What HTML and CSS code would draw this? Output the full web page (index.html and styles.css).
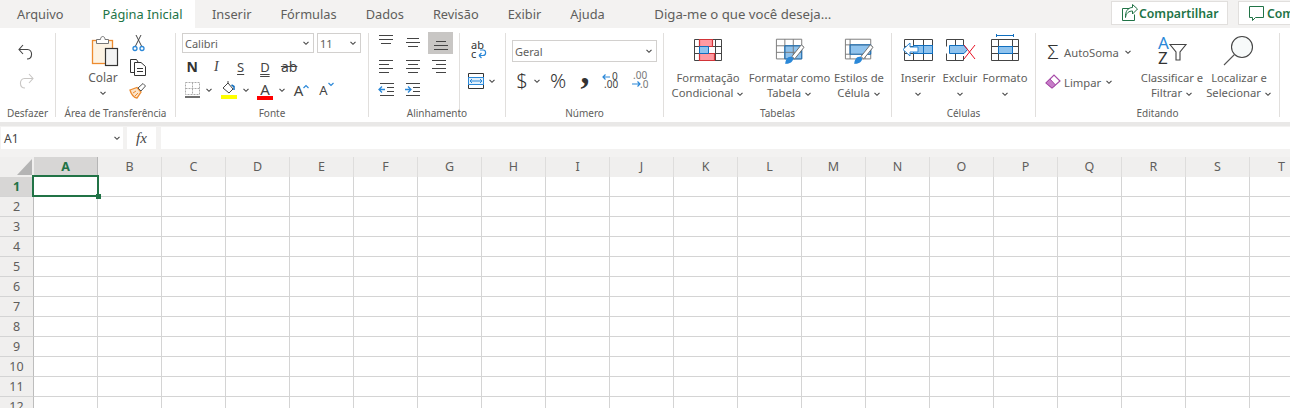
FILE: index.html
```html
<!DOCTYPE html>
<html lang="pt-BR">
<head>
<meta charset="utf-8">
<title>Excel</title>
<link rel="stylesheet" href="styles.css">
</head>
<body>
<svg class="defs" aria-hidden="true"><symbol id="chev" viewBox="0 0 8 8"><path d="M1.500 2.800 4 5.300 6.500 2.800" fill="none" stroke="#444" stroke-width="1.100"/></symbol></svg>
<header class="tabbar">
  <nav class="tabs">
    <a class="tab tab-file">Arquivo</a>
    <a class="tab tab-active">Página Inicial</a>
    <a class="tab">Inserir</a>
    <a class="tab">Fórmulas</a>
    <a class="tab">Dados</a>
    <a class="tab">Revisão</a>
    <a class="tab">Exibir</a>
    <a class="tab">Ajuda</a>
    <span class="tell">Diga-me o que você deseja...</span>
  </nav>
  <div class="actions">
    <button class="action action-share"><svg width="20" height="20" viewBox="0 0 20 20" fill="none" stroke="#217346"><path d="M9.500 5.500H2.500V17.500H14.500V11.500"/><path d="M5.500 14.500C6 10 9 8 12.500 8V11L17.500 6 12.500 1.500V4.500C8 4.500 5 8.500 5.500 14.500Z"/></svg>Compartilhar</button>
    <button class="action action-comment"><svg width="20" height="20" viewBox="0 0 20 20" fill="none" stroke="#217346"><path d="M2.500 3.500H16.500V14.500H8.500L5.500 17.500V14.500H2.500Z"/></svg>Comentários</button>
  </div>
</header>

<section class="ribbon">
  <div class="group g-undo">
    <div class="body undo-body">
      <svg class="ico" width="20" height="20" viewBox="0 0 20 20" fill="none" stroke="#444" stroke-width="1.100"><path d="M7 4 3 8.500 7 13M3 8.500H11.500C17 8.500 17 18 11 18"/></svg>
      <svg class="ico" width="20" height="20" viewBox="0 0 20 20" fill="none" stroke="#c8c6c4" stroke-width="1.100"><path d="M13 4 17 8.500 13 13M17 8.500H8.500C3 8.500 3 18 9 18"/></svg>
    </div>
    <div class="label">Desfazer</div>
  </div>

  <div class="group g-clip">
    <div class="body clip-body">
      <div class="paste">
        <svg width="32" height="32" viewBox="0 0 32 32"><rect x="5.500" y="5.500" width="20" height="23" fill="#fdf3e3" stroke="#ed8b2f" stroke-width="1.300"/><path d="M9.500 8.500V4.500H13.500C13.500 .5 18 .5 18 4.500H21.500V8.500Z" fill="#fff" stroke="#777"/><rect x="18.500" y="13.500" width="12" height="17" fill="#f3f3f3" stroke="#333" stroke-width="1.200"/></svg>
        <span class="colar">Colar</span>
        <svg class="chev" width="8" height="8"><use href="#chev"/></svg>
      </div>
      <div class="clip-tools">
        <svg width="20" height="20" viewBox="0 0 20 20" fill="none"><path d="M8.500 13 14 2M14.500 13 9 2" stroke="#444"/><circle cx="8" cy="15.500" r="2" stroke="#2b88d8" stroke-width="1.300"/><circle cx="15" cy="15.500" r="2" stroke="#2b88d8" stroke-width="1.300"/></svg>
        <svg width="20" height="20" viewBox="0 0 20 20" fill="none" stroke="#333"><path d="M7.500 15.500H3.500V2.500H9.500L11 5"/><path d="M7.500 5.500H14L18.500 9.500V18.500H7.500Z" fill="#fff"/><path d="M10 11.500H16M10 14.500H16"/></svg>
        <svg width="20" height="20" viewBox="0 0 20 20" fill="none"><path d="M3 9 10 6.500 14 11 10 17C7 17 4 13 3 9Z" fill="#fbe3c8" stroke="#ed8b2f" stroke-width="1.300"/><path d="M6 12 9 10M8 15 11 12" stroke="#ed8b2f"/><path d="M11 7 16 2.500 18.500 5 14 10Z" fill="#fff" stroke="#555"/></svg>
      </div>
    </div>
    <div class="label">Área de Transferência</div>
  </div>

  <div class="group g-font">
    <div class="body font-body">
      <div class="selects">
        <div class="select sel-font"><span>Calibri</span><svg width="8" height="8"><use href="#chev"/></svg></div>
        <div class="select sel-size"><span>11</span><svg width="8" height="8"><use href="#chev"/></svg></div>
      </div>
      <div class="style-row">
        <span class="st st-b">N</span><span class="st st-i">I</span><span class="st st-s">S</span><span class="st st-d">D</span><span class="st st-x">ab</span>
      </div>
      <div class="color-row">
        <div class="split"><span class="split-ico"><svg width="18" height="20" viewBox="0 0 18 20" fill="none"><path d="M2.500 2.500H16.500V14.500H2.500ZM9.500 2.500V14.500M2.500 8.500H16.500" stroke="#aaa" stroke-dasharray="2 1"/><path d="M2 17H17" stroke="#333" stroke-width="1.400"/></svg></span><svg class="sp-chev" width="8" height="8"><use href="#chev"/></svg></div>
        <div class="split"><span class="split-ico"><svg width="18" height="20" viewBox="0 0 18 20" fill="none"><path d="M3 8 8 3 13 9 9 13Z" stroke="#444"/><path d="M8 1V4" stroke="#444"/><path d="M14 10V6.500L11.500 5" stroke="#106ebe" stroke-width="1.500"/><rect x="1" y="15" width="16" height="4" fill="#ffff00" stroke="none"/></svg></span><svg class="sp-chev" width="8" height="8"><use href="#chev"/></svg></div>
        <div class="split"><span class="split-ico fontcolor">A</span><svg class="sp-chev" width="8" height="8"><use href="#chev"/></svg></div>
        <span class="grow">A<svg width="6" height="5" viewBox="0 0 6 5"><path d="M.5 4 3 1.500 5.500 4" fill="none" stroke="#2b88d8" stroke-width="1.200"/></svg></span>
        <span class="shrink">A<svg width="6" height="5" viewBox="0 0 6 5"><path d="M.5 1 3 3.500 5.500 1" fill="none" stroke="#2b88d8" stroke-width="1.200"/></svg></span>
      </div>
    </div>
    <div class="label">Fonte</div>
  </div>

  <div class="group g-align">
    <div class="body align-body">
      <div class="al-grid">
        <span class="al"><svg width="20" height="20" fill="none" stroke="#444"><path d="M3 2.500H17M3 6.500H17M5 10.500H15"/></svg></span>
        <span class="al"><svg width="20" height="20" fill="none" stroke="#444"><path d="M4 5.500H16M3 9.500H17M5 13.500H15"/></svg></span>
        <span class="al al-on"><svg width="20" height="20" fill="none" stroke="#444"><path d="M5 8.500H15M3 12.500H17M3 16.500H17"/></svg></span>
        <span class="al"><svg width="20" height="20" fill="none" stroke="#444"><path d="M3 3.500H17M3 7.500H13M3 11.500H17M3 15.500H13"/></svg></span>
        <span class="al"><svg width="20" height="20" fill="none" stroke="#444"><path d="M3 3.500H17M5 7.500H15M3 11.500H17M5 15.500H15"/></svg></span>
        <span class="al"><svg width="20" height="20" fill="none" stroke="#444"><path d="M3 3.500H17M7 7.500H17M3 11.500H17M7 15.500H17"/></svg></span>
        <span class="al"><svg width="20" height="20" fill="none"><path d="M4 2.500H18M11 6.500H18M11 10.500H18M4 14.500H18" stroke="#444"/><path d="M9 8.500H3M6 5.500 3 8.500 6 11.500" stroke="#2b88d8" stroke-width="1.300"/></svg></span>
        <span class="al"><svg width="20" height="20" fill="none"><path d="M3 2.500H17M10 6.500H17M10 10.500H17M3 14.500H17" stroke="#444"/><path d="M2 8.500H8M5 5.500 8 8.500 5 11.500" stroke="#2b88d8" stroke-width="1.300"/></svg></span>
      </div>
    </div>
    <div class="label-run">Alinhamento</div>
  </div>

  <div class="group g-wrap">
    <div class="body wrap-body">
      <svg width="24" height="20" viewBox="0 0 24 20" fill="none"><text x="6" y="9" class="abc">ab</text><text x="6" y="18" class="abc">c</text><path d="M14 15.500H18C21.500 15.500 21.500 10 18 10H15M14 15.500 16.500 13M14 15.500 16.500 18" stroke="#2b88d8" stroke-width="1.200"/></svg>
      <div class="merge"><svg width="24" height="20" viewBox="0 0 24 20" fill="none"><path d="M3.500 2.500H18.500V17.500H3.500ZM3.500 6.500H18.500M3.500 13.500H18.500" stroke="#333"/><rect x="3.500" y="6.500" width="15" height="7" fill="#e3f0fa" stroke="#2b88d8"/><path d="M5 10H17M7 8 5 10 7 12M15 8 17 10 15 12" stroke="#2b88d8"/></svg><svg width="8" height="8"><use href="#chev"/></svg></div>
    </div>
  </div>

  <div class="group g-num">
    <div class="body num-body">
      <div class="select sel-num"><span>Geral</span><svg width="8" height="8"><use href="#chev"/></svg></div>
      <div class="num-row">
        <span class="n-dollar">$</span>
        <svg class="n-chev" width="8" height="8"><use href="#chev"/></svg>
        <span class="n-pct">%</span>
        <span class="n-comma">,</span>
        <span class="n-dec"><svg width="22" height="20" viewBox="0 0 22 20" fill="none"><path d="M10 6H3M5.500 3.500 3 6 5.500 8.500" stroke="#2b88d8" stroke-width="1.200"/><text x="12" y="9" class="dec">0</text><text x="4" y="17" class="dec">.00</text></svg></span>
        <span class="n-inc"><svg width="22" height="20" viewBox="0 0 22 20" fill="none"><text x="4" y="8" class="dec dec-l">.00</text><path d="M3 13H11M8.500 10.500 11 13 8.500 15.500" stroke="#2b88d8" stroke-width="1.200"/><text x="11" y="17" class="dec dec-l">.0</text></svg></span>
      </div>
    </div>
    <div class="label">Número</div>
  </div>

  <div class="group g-tab">
    <div class="body big-row">
      <div class="big b-cond">
        <svg width="30" height="30" viewBox="0 0 30 30" fill="none"><rect x="7" y="4" width="13" height="7" fill="#ff9aa2"/><rect x="7" y="11" width="9" height="7" fill="#8fc3ee"/><rect x="7" y="18" width="15" height="7" fill="#ff9aa2"/><path d="M1.500 4.500H28.500V25.500H1.500ZM1.500 11.500H28.500M1.500 18.500H28.500M6.500 4.500V25.500M15.500 11.500V18.500M22.500 4.500V25.500" stroke="#444"/><path d="M6.500 4.500H19.500V11.500H6.500ZM6.500 18.500H21.500V25.500H6.500Z" stroke="#d13438" stroke-width="1.200"/><path d="M6.500 11.500H15.500V18.500H6.500Z" stroke="#106ebe"/></svg>
        <span class="big-text">Formatação<br>Condicional <svg width="8" height="8"><use href="#chev"/></svg></span>
      </div>
      <div class="big b-fmt">
        <svg width="32" height="32" viewBox="0 0 32 32" fill="none"><rect x="10" y="11" width="18" height="14" fill="#8fc3ee"/><path d="M1.500 4.500H28.500V25.500H1.500ZM1.500 11.500H28.500M1.500 18.500H28.500M10.500 4.500V25.500M19.500 4.500V25.500" stroke="#777"/><path d="M10.500 11.500H28.500V25.500H10.500Z" stroke="#106ebe"/><path d="M18 23 28 10.500 31 13 21 25.500Z" fill="#fff" stroke="#666"/><path d="M11 31C11 26 14 22 18 23.500 20.500 25 19 28.500 16.500 29.500 14.500 30.500 13 30.500 11 31Z" fill="#2b88d8"/></svg>
        <span class="big-text">Formatar como<br>Tabela <svg width="8" height="8"><use href="#chev"/></svg></span>
      </div>
      <div class="big b-cell">
        <svg width="32" height="32" viewBox="0 0 32 32" fill="none"><rect x="6" y="10" width="23" height="10" fill="#8fc3ee"/><path d="M1.500 4.500H28.500V25.500H1.500ZM1.500 10.500H28.500M1.500 20.500H28.500M6.500 4.500V25.500M22.500 20.500V25.500" stroke="#777"/><path d="M6.500 10.500H28.500V20.500H6.500Z" stroke="#106ebe"/><path d="M18 23 28 10.500 31 13 21 25.500Z" fill="#fff" stroke="#666"/><path d="M11 31C11 26 14 22 18 23.500 20.500 25 19 28.500 16.500 29.500 14.500 30.500 13 30.500 11 31Z" fill="#2b88d8"/></svg>
        <span class="big-text">Estilos de<br>Célula <svg width="8" height="8"><use href="#chev"/></svg></span>
      </div>
    </div>
    <div class="label">Tabelas</div>
  </div>

  <div class="group g-cells">
    <div class="body big-row">
      <div class="big b-ins">
        <svg width="32" height="30" viewBox="0 0 32 30" fill="none"><path d="M2.500 4.500H30.500V25.500H2.500ZM2.500 11.500H30.500M2.500 18.500H30.500M11.500 4.500V25.500M21.500 4.500V25.500" stroke="#444"/><rect x="11.500" y="10.500" width="19" height="8" fill="#8fc3ee" stroke="#106ebe"/><path d="M21.500 10.500V18.500" stroke="#106ebe"/><path d="M16 12H8V8L1 14.500 8 21V17H16Z" fill="#fff" stroke="#2b88d8"/></svg>
        <span class="big-text">Inserir<br><svg width="8" height="8"><use href="#chev"/></svg></span>
      </div>
      <div class="big b-del">
        <svg width="32" height="30" viewBox="0 0 32 30" fill="none"><path d="M2.500 4.500H19.500V10M2.500 25.500H19.500V21M2.500 4.500V11.500M2.500 18.500V25.500M11.500 4.500V25.500" stroke="#444"/><path d="M5.500 10.500H20L23.500 14.500 20 18.500H5.500Z" fill="#8fc3ee" stroke="#106ebe"/><path d="M20 10 31 24M31 10 20 24" stroke="#e81123"/></svg>
        <span class="big-text">Excluir<br><svg width="8" height="8"><use href="#chev"/></svg></span>
      </div>
      <div class="big b-fmtc">
        <svg width="30" height="30" viewBox="0 0 30 30" fill="none"><path d="M1.500 4.500H28.500V25.500H1.500ZM1.500 11.500H28.500M1.500 18.500H28.500M8.500 4.500V25.500M22.500 4.500V25.500" stroke="#444"/><rect x="8.500" y="11.500" width="14" height="7" fill="#8fc3ee" stroke="#106ebe"/><path d="M6.500 .5H23.500M6.500 -1V2M23.500 -1V2" stroke="#106ebe"/></svg>
        <span class="big-text">Formato<br><svg width="8" height="8"><use href="#chev"/></svg></span>
      </div>
    </div>
    <div class="label">Células</div>
  </div>

  <div class="group g-edit">
    <div class="body edit-body">
      <div class="edit-col">
        <div class="edit-row"><span class="sigma">Σ</span><span class="edit-text">AutoSoma</span><svg class="ec1" width="8" height="8"><use href="#chev"/></svg></div>
        <div class="edit-row"><svg width="16" height="18" viewBox="0 0 16 18" fill="none"><path d="M1 10 9 2 15 8 7 15Z" fill="#fff" stroke="#a74ba8" stroke-width="1.200"/><path d="M1 10 5 6 10.500 12 7 15Z" fill="#c77dc8" stroke="#a74ba8"/></svg><span class="edit-text">Limpar</span><svg class="ec2" width="8" height="8"><use href="#chev"/></svg></div>
      </div>
      <div class="big b-sort">
        <svg width="30" height="30" viewBox="0 0 30 30" fill="none"><text x="1" y="14" class="az az-a">A</text><text x="1" y="29" class="az">Z</text><path d="M13 9.500H29L23 17V25H19V17Z" stroke="#444" stroke-width="1.100"/></svg>
        <span class="big-text">Classificar e<br>Filtrar <svg width="8" height="8"><use href="#chev"/></svg></span>
      </div>
      <div class="big b-find">
        <svg width="32" height="34" viewBox="0 0 32 34" fill="none"><circle cx="19" cy="14" r="10.500" fill="#f7fafa" stroke="#444" stroke-width="1.100"/><path d="M11.500 21.500 1 32" stroke="#555" stroke-width="1.100"/></svg>
        <span class="big-text">Localizar e<br>Selecionar <svg width="8" height="8"><use href="#chev"/></svg></span>
      </div>
    </div>
    <div class="label">Editando</div>
  </div>
</section>

<section class="formula">
  <div class="namebox"><span>A1</span><svg width="8" height="8"><use href="#chev"/></svg></div>
  <div class="fxbox">fx</div>
  <div class="fxinput"></div>
</section>

<main class="sheet">
<table class="grid">
<thead><tr><th class="corner"><span></span></th><th class="col-on">A</th><th>B</th><th>C</th><th>D</th><th>E</th><th>F</th><th>G</th><th>H</th><th>I</th><th>J</th><th>K</th><th>L</th><th>M</th><th>N</th><th>O</th><th>P</th><th>Q</th><th>R</th><th>S</th><th>T</th></tr></thead>
<tbody>
<tr><th class="row-on">1</th><td class="a1"><div class="selection"><i></i></div></td><td></td><td></td><td></td><td></td><td></td><td></td><td></td><td></td><td></td><td></td><td></td><td></td><td></td><td></td><td></td><td></td><td></td><td></td><td></td></tr>
<tr><th>2</th><td></td><td></td><td></td><td></td><td></td><td></td><td></td><td></td><td></td><td></td><td></td><td></td><td></td><td></td><td></td><td></td><td></td><td></td><td></td><td></td></tr>
<tr><th>3</th><td></td><td></td><td></td><td></td><td></td><td></td><td></td><td></td><td></td><td></td><td></td><td></td><td></td><td></td><td></td><td></td><td></td><td></td><td></td><td></td></tr>
<tr><th>4</th><td></td><td></td><td></td><td></td><td></td><td></td><td></td><td></td><td></td><td></td><td></td><td></td><td></td><td></td><td></td><td></td><td></td><td></td><td></td><td></td></tr>
<tr><th>5</th><td></td><td></td><td></td><td></td><td></td><td></td><td></td><td></td><td></td><td></td><td></td><td></td><td></td><td></td><td></td><td></td><td></td><td></td><td></td><td></td></tr>
<tr><th>6</th><td></td><td></td><td></td><td></td><td></td><td></td><td></td><td></td><td></td><td></td><td></td><td></td><td></td><td></td><td></td><td></td><td></td><td></td><td></td><td></td></tr>
<tr><th>7</th><td></td><td></td><td></td><td></td><td></td><td></td><td></td><td></td><td></td><td></td><td></td><td></td><td></td><td></td><td></td><td></td><td></td><td></td><td></td><td></td></tr>
<tr><th>8</th><td></td><td></td><td></td><td></td><td></td><td></td><td></td><td></td><td></td><td></td><td></td><td></td><td></td><td></td><td></td><td></td><td></td><td></td><td></td><td></td></tr>
<tr><th>9</th><td></td><td></td><td></td><td></td><td></td><td></td><td></td><td></td><td></td><td></td><td></td><td></td><td></td><td></td><td></td><td></td><td></td><td></td><td></td><td></td></tr>
<tr><th>10</th><td></td><td></td><td></td><td></td><td></td><td></td><td></td><td></td><td></td><td></td><td></td><td></td><td></td><td></td><td></td><td></td><td></td><td></td><td></td><td></td></tr>
<tr><th>11</th><td></td><td></td><td></td><td></td><td></td><td></td><td></td><td></td><td></td><td></td><td></td><td></td><td></td><td></td><td></td><td></td><td></td><td></td><td></td><td></td></tr>
<tr><th>12</th><td></td><td></td><td></td><td></td><td></td><td></td><td></td><td></td><td></td><td></td><td></td><td></td><td></td><td></td><td></td><td></td><td></td><td></td><td></td><td></td></tr>
</tbody>
</table>
</main>
</body>
</html>
```

FILE: styles.css
```css
* { box-sizing: border-box; }
html, body { margin: 0; height: 408px; overflow: hidden; background: #fff; }
body { font-family: "Noto Sans", "Open Sans", sans-serif; font-size: 11.250px; color: #605e5c; width: 1290px; }
svg { display: block; flex: none; overflow: visible; }
.defs { position: absolute; width: 0; height: 0; }

/* tab bar */
.tabbar { height: 28px; background: #f3f2f1; display: flex; justify-content: space-between; overflow: hidden; }
.tabs { display: flex; align-items: center; height: 28px; font-size: 12.800px; color: #605e5c; }
.tab { padding: 0 14.500px; line-height: 28px; white-space: nowrap; }
.tab-file { padding: 0 0 0 17px; width: 90px; }
.tab-active { background: #fff; color: #217346; padding: 0; width: 105px; text-align: center; margin-right: 2.500px; }
.tell { margin-left: 35px; color: #605e5c; white-space: nowrap; font-size: 13.200px; }
.actions { display: flex; gap: 10px; width: 179px; flex: none; padding-top: 1px; }
.action { height: 24px; background: #fff; border: 1px solid #e1dfdd; color: #217346; font: 600 12.250px "Noto Sans", sans-serif; display: flex; align-items: center; padding: 0 0 0 8px; white-space: nowrap; flex: none; }
.action svg { margin-right: -1px; }
.action-share { width: 117px; }
.action-comment { width: 100px; }
.action-comment svg { margin-right: 0; }

/* ribbon */
.ribbon { height: 94px; padding-top: 5px; display: flex; align-items: flex-start; background: #fff; }
.group { height: 84px; border-right: 1px solid #e1dfdd; display: flex; flex-direction: column; flex: none; }
.body { height: 73px; }
.label, .label-run { height: 11px; line-height: 14px; text-align: center; font-size: 10px; color: #605e5c; white-space: nowrap; }

.g-undo { width: 56px; }
.g-clip { width: 120px; }
.g-font { width: 193px; }
.g-align { width: 91px; }
.g-wrap { width: 46px; }
.g-num { width: 158px; }
.g-tab { width: 228px; }
.g-cells { width: 144px; }
.g-edit { width: 244px; }
.label-run { width: 136px; }

.undo-body { display: flex; flex-direction: column; padding: 8px 0 0 16px; gap: 9px; }

.clip-body { display: flex; padding-left: 23px; }
.paste { width: 48px; display: flex; flex-direction: column; align-items: center; padding-top: 2px; }
.colar { font-size: 12px; line-height: 14px; margin-top: 4px; }
.chev { margin-top: 4px; }
.clip-tools { display: flex; flex-direction: column; gap: 4px; }

.font-body { padding-left: 6px; }
.selects { display: flex; gap: 3px; }
.select { height: 20px; border: 1px solid #d2d0ce; display: flex; align-items: center; justify-content: space-between; padding: 0 3px 0 2px; font-size: 11px; background: #fff; }
.sel-font { width: 132px; }
.sel-size { width: 44px; }
.style-row { display: flex; margin: 3px 0 0 -2px; height: 21px; align-items: center; }
.st { width: 24.250px; text-align: center; font-size: 14px; color: #444; line-height: 20px; }
.st-b { font-weight: 700; color: #333; }
.st-i { font-style: italic; font-family: "Liberation Serif", serif; }
.st-s { text-decoration: underline; text-underline-offset: 2px; font-size: 13px; }
.st-d { text-decoration: underline double; text-underline-offset: 2px; font-size: 13px; }
.st-x { text-decoration: line-through; font-size: 14px; }
.color-row { display: flex; align-items: center; margin: 3px 0 0 1px; height: 20px; }
.split { width: 36.500px; display: flex; align-items: center; }
.split-ico { width: 18px; display: block; }
.sp-chev { margin-left: 4px; }
.fontcolor { height: 20px; text-align: center; font-size: 15px; line-height: 18px; color: #444; border-bottom: 4px solid #ff0000; width: 16px; margin-left: 1px; margin-right: 1px; }
.grow, .shrink { width: 18px; display: flex; justify-content: center; font-size: 15px; color: #444; line-height: 20px; }
.grow svg { margin-top: 4px; }
.shrink { margin-left: 7px; font-size: 13px; }
.shrink svg { margin-top: 2px; }

.align-body { padding: 0 0 0 4px; margin-top: -2px; height: 75px; }
.al-grid { display: grid; grid-template-columns: repeat(3, 26.500px); grid-auto-rows: 24px; }
.al { display: flex; align-items: center; justify-content: center; height: 24px; }
.al-on { background: #c8c6c4; height: 22px; margin-top: 1px; width: 25px; margin-left: 2px; }

.wrap-body { padding: 7px 0 0 5px; display: flex; flex-direction: column; gap: 11px; }
.abc { font: 11px "Noto Sans", sans-serif; fill: #333; stroke: none; }
.merge { display: flex; align-items: center; gap: 0; }
.merge svg + svg { margin-left: -1px; }

.num-body { padding: 7px 0 0 6px; }
.sel-num { width: 145px; height: 22px; }
.num-row { display: flex; align-items: center; height: 20px; margin-top: 9px; color: #333; }
.n-dollar { width: 20px; text-align: center; font-size: 20px; font-weight: 300; line-height: 20px; }
.n-chev { margin-right: 1px; margin-left: 1px; }
.n-pct { width: 32px; text-align: center; font-size: 20px; font-weight: 300; line-height: 20px; }
.n-comma { width: 22px; text-align: center; font: 700 36px/0 "Liberation Serif", serif; height: 20px; }
.n-dec { width: 30px; display: flex; justify-content: center; }
.n-inc { width: 27px; display: flex; justify-content: center; }
.dec { font: 10px "Noto Sans", sans-serif; fill: #444; stroke: none; }
.dec-l { fill: #777; }

.big-row { display: flex; }
.g-tab .big-row { padding-left: 4px; }
.g-cells .big-row { padding-left: 5px; }
.big { display: flex; flex-direction: column; align-items: center; flex: none; }
.big > svg { margin-top: 2px; height: 30px; margin-bottom: 5px; }
.big-text { text-align: center; line-height: 15px; white-space: nowrap; font-size: 11.250px; }
.big-text svg { display: inline-block; vertical-align: -1px; }
.b-cond { width: 80px; }
.b-fmt { width: 83px; }
.b-cell { width: 56px; }
.b-ins, .b-del { width: 42px; }
.b-fmtc { width: 48px; }

.edit-body { display: flex; }
.edit-col { width: 104px; padding: 9px 0 0 9px; display: flex; flex-direction: column; gap: 10px; }
.edit-row { display: flex; align-items: center; height: 20px; }
.sigma { width: 16px; font-size: 20px; font-weight: 300; line-height: 20px; color: #333; text-align: center; }
.edit-text { margin-left: 3px; font-size: 11.250px; }
.ec1 { margin-left: 5px; }
.ec2 { margin-left: 4px; }
.b-sort { width: 64px; }
.b-find { width: 70px; }
.b-find > svg { margin-top: 0; height: 34px; margin-bottom: 3px; }
.az { font: 17px "Noto Sans", sans-serif; fill: #333; stroke: none; }
.az-a { fill: #2b88d8; }

/* formula bar */
.formula { height: 35px; background: #f3f2f1; border-top: 4px solid #e9e8e7; padding: 1px 0 0 1px; display: flex; }
.namebox { width: 122px; height: 22px; background: #fff; display: flex; align-items: center; justify-content: space-between; padding: 0 2px 0 3px; font-size: 12px; color: #444; }
.fxbox { width: 29px; height: 22px; background: #fff; margin-left: 4px; font: italic 400 15px "Liberation Serif", serif; color: #444; text-align: center; line-height: 22px; }
.fxinput { flex: 1; height: 22px; margin-left: 5px; background: #fff; }

/* sheet */
.sheet { height: 251px; overflow: hidden; }
.grid { border-collapse: separate; border-spacing: 0; table-layout: fixed; width: 1314px; }
.grid th, .grid td { height: 20px; padding: 0; box-sizing: border-box; }
.grid td { border-right: 1px solid #d4d4d4; border-bottom: 1px solid #d4d4d4; }
.grid thead th { width: 64px; background: #f0efee; font-weight: 400; font-size: 12.500px; line-height: 16px; color: #605e5c; border-right: 1px solid #dedddc; }
.grid thead .corner { width: 34px; border-right: 0; }
.corner span { display: block; width: 15px; height: 16px; margin: 0 2px 0 auto; background: #b4b4b4; clip-path: polygon(100% 0, 100% 100%, 0 100%); }
.grid thead .col-on { background: #d7d6d5; color: #217346; font-weight: 700; border-right: 1px solid #b5b5b5; }
.grid tbody th { background: #f0efee; font-weight: 400; font-size: 12.500px; line-height: 16px; padding-top: 1px; color: #605e5c; border-right: 1px solid #bdbdbd; border-bottom: 1px solid #d4d4d4; }
.grid tbody .row-on { background: #d7d6d5; color: #217346; font-weight: 700; }
.a1 { position: relative; }
.selection { position: absolute; left: -2px; top: -2px; right: -2px; bottom: -1px; border: 2px solid #217346; }
.selection i { position: absolute; right: -4px; bottom: -4px; width: 5px; height: 5px; background: #217346; }
```
